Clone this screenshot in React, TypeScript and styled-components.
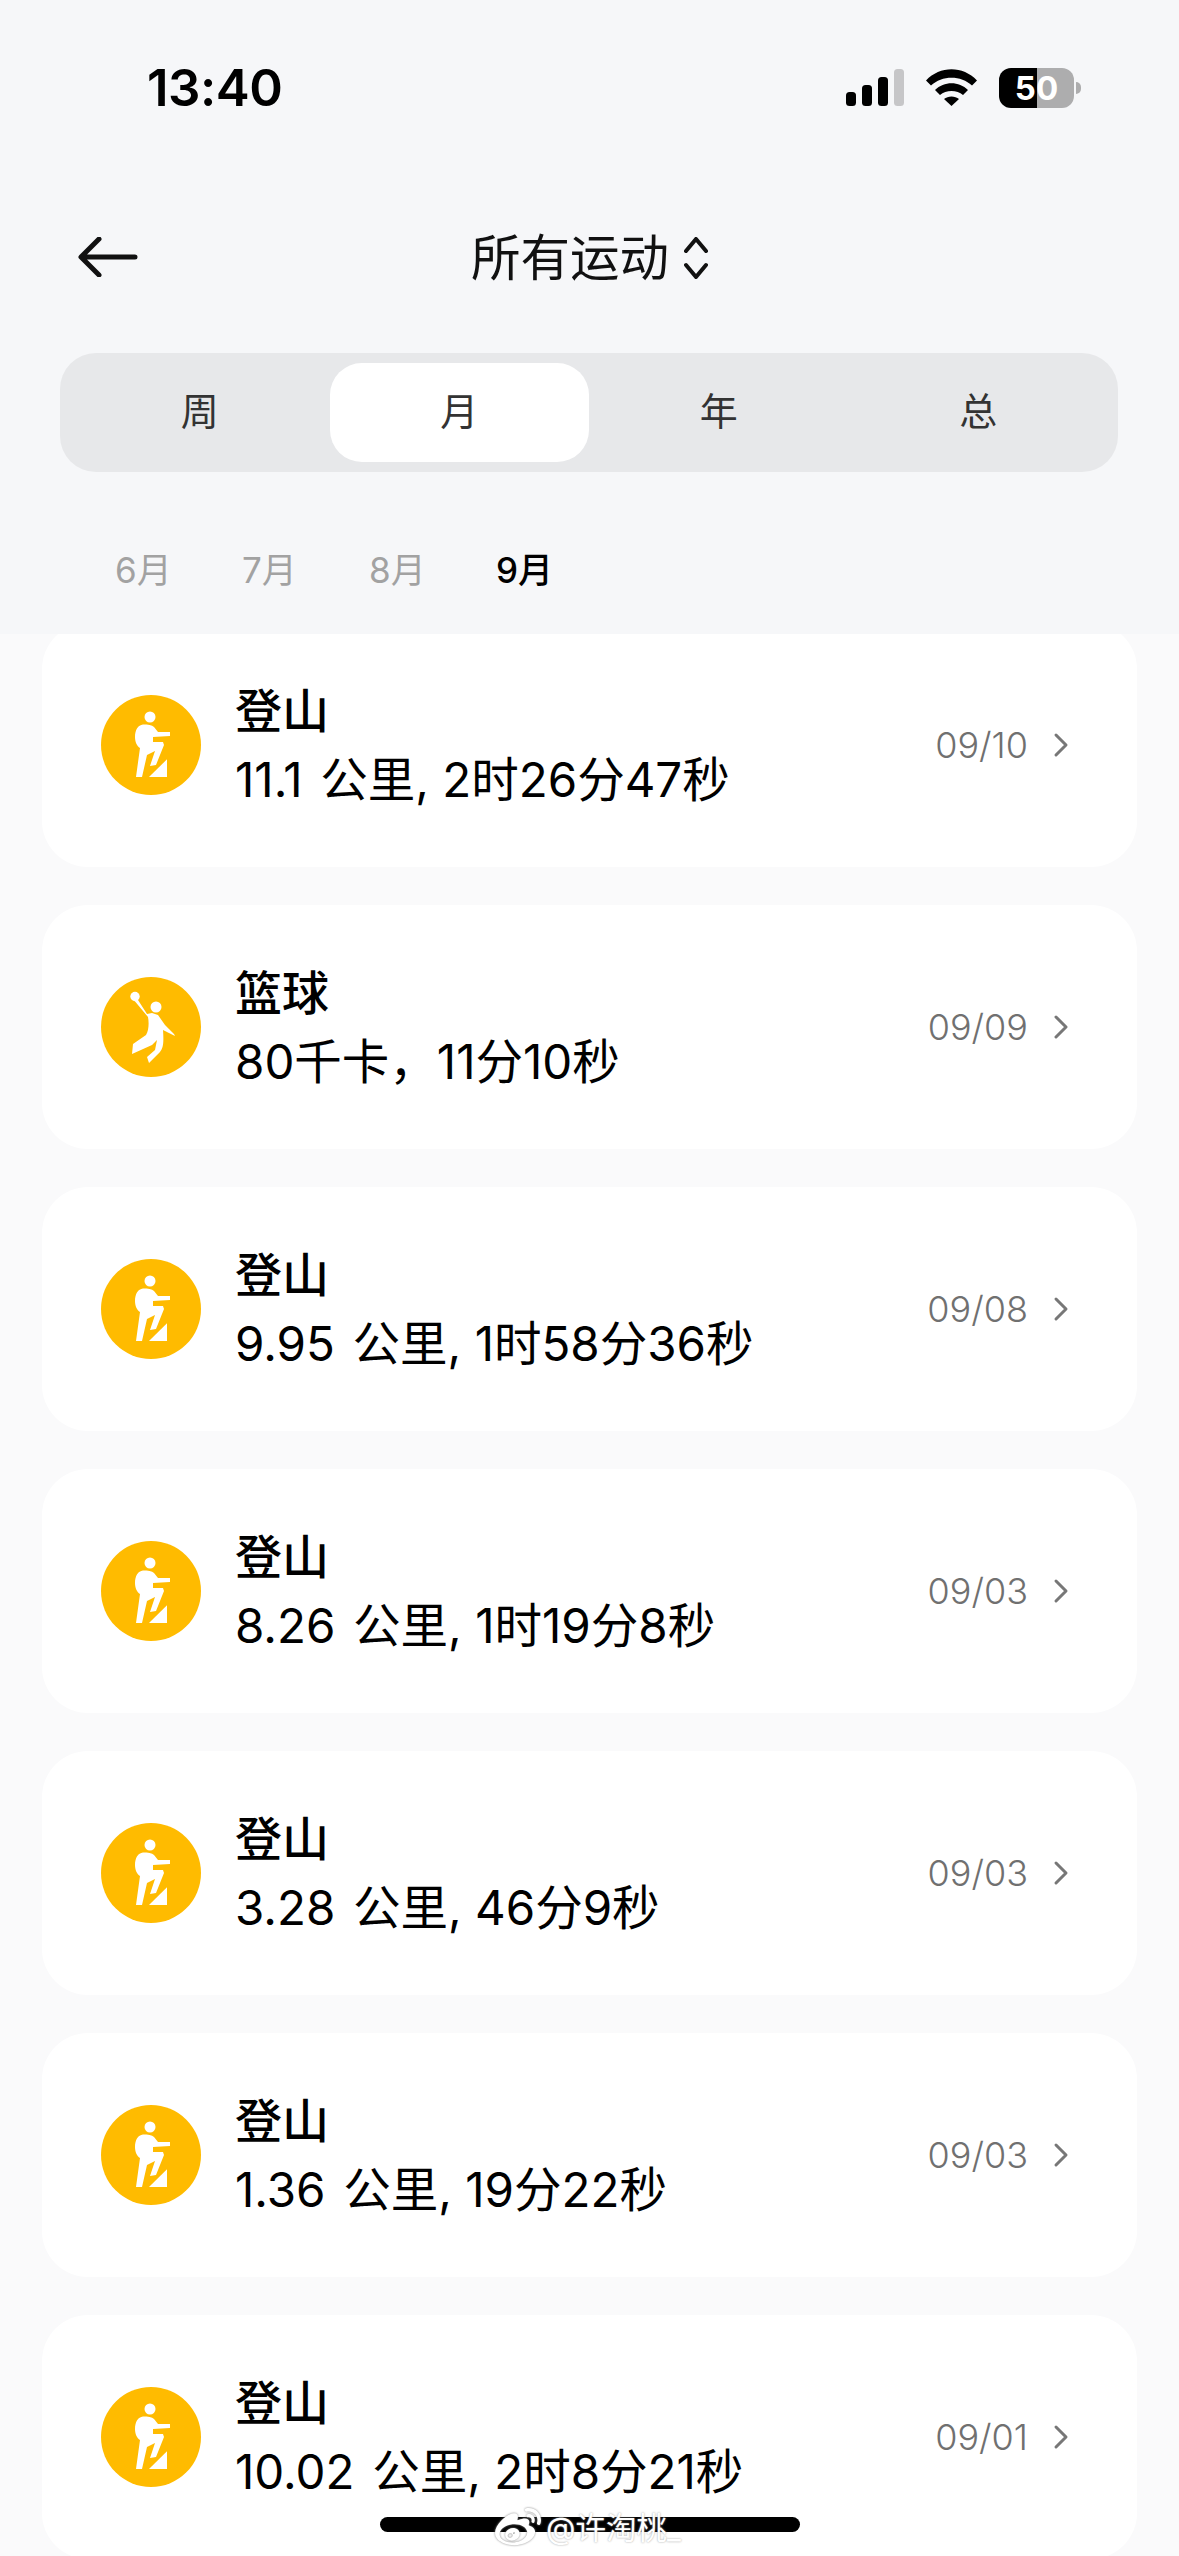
import React from "react"
import styled, { createGlobalStyle } from "styled-components"
import { FaWeibo } from "react-icons/fa"

const FONT = `Inter, "Noto Sans CJK SC", sans-serif`

const GlobalStyle = createGlobalStyle`
  html, body {
    margin: 0;
    padding: 0;
    background: #fafafb;
  }
  * {
    box-sizing: border-box;
  }
`

const Page = styled.div`
  position: relative;
  width: 1179px;
  height: 2556px;
  overflow: hidden;
  font-family: ${FONT};
  color: #000;
  display: flex;
  flex-direction: column;
`

const Header = styled.header`
  flex: none;
  height: 634px;
  background: #f6f7f9;
  display: flex;
  flex-direction: column;
`

const StatusBar = styled.div`
  height: 175px;
  padding: 0 105px 0 147px;
  display: flex;
  align-items: center;
  justify-content: space-between;
`

const Clock = styled.div`
  font-size: 51px;
  font-weight: 600;
  letter-spacing: -0.5px;
`

const StatusIcons = styled.div`
  display: flex;
  align-items: center;
  gap: 22px;
`

const Battery = styled.div`
  position: relative;
  width: 75px;
  height: 40px;
  border-radius: 12px;
  background: linear-gradient(90deg, #000 51%, #adadae 51%);
  color: #fff;
  font-size: 33px;
  font-weight: 700;
  line-height: 40px;
  text-align: center;

  &::after {
    content: "";
    position: absolute;
    right: -7px;
    top: 14px;
    width: 5px;
    height: 12px;
    border-radius: 0 6px 6px 0;
    background: #adadae;
  }
`

const NavBar = styled.div`
  position: relative;
  height: 176px;
  display: flex;
  align-items: flex-start;
  justify-content: center;
  padding-top: 54px;
`

const BackButton = styled.button`
  position: absolute;
  left: 78px;
  top: 62px;
  padding: 0;
  border: 0;
  background: none;
  display: flex;
`

const NavTitle = styled.div`
  display: flex;
  align-items: center;
  gap: 15px;
  font-size: 49.500px;
  line-height: 58px;
  color: #111;
`

const Segments = styled.div`
  margin: 2px 61px 0 60px;
  height: 119px;
  padding: 10px;
  border-radius: 36px;
  background: #e7e8ea;
  display: grid;
  grid-template-columns: repeat(4, 1fr);
`

const Segment = styled.div<{ $active?: boolean }>`
  display: flex;
  align-items: center;
  justify-content: center;
  padding-bottom: 8px;
  font-size: 38px;
  color: #333;
  border-radius: 32px;
  background: ${(p) => (p.$active ? "#fff" : "transparent")};
`

const Months = styled.div`
  margin-top: 78px;
  padding-left: 115px;
  display: flex;
  gap: 76px;
`

const Month = styled.div<{ $active?: boolean }>`
  width: 51px;
  font-size: 35px;
  line-height: 40px;
  white-space: nowrap;
  font-weight: ${(p) => (p.$active ? 500 : 400)};
  color: ${(p) => (p.$active ? "#000" : "#a2a2a2")};
`

const List = styled.main`
  flex: 1;
  min-height: 0;
  overflow: hidden;
  padding: 0 42px;
  display: flex;
  flex-direction: column;
  gap: 38px;
`

const Card = styled.article`
  flex: none;
  height: 244px;
  background: #fff;
  border-radius: 46px;
  padding: 0 68px 0 59px;
  display: flex;
  align-items: center;

  &:first-child {
    margin-top: -11px;
  }
`

const Badge = styled.svg`
  flex: none;
  width: 100px;
  height: 100px;
`

const Body = styled.div`
  flex: 1;
  margin-left: 34px;
`

const Title = styled.div`
  font-size: 47px;
  line-height: 69px;
  font-weight: 500;
`

const Detail = styled.div`
  font-size: 47.500px;
  line-height: 69px;
  white-space: pre;
`

const DateLabel = styled.div`
  font-size: 36px;
  color: #707070;
  font-weight: 300;
`

const Chevron = styled.svg`
  flex: none;
  margin-left: 25px;
  width: 16px;
  height: 26px;
`

const HomeBar = styled.div`
  position: absolute;
  left: 380px;
  top: 2517px;
  width: 420px;
  height: 15px;
  border-radius: 8px;
  background: #000;
`

const Watermark = styled.div`
  position: absolute;
  left: 495px;
  top: 2505px;
  display: flex;
  align-items: center;
  gap: 5px;
  font-size: 30.5px;
  line-height: 38px;
  color: #fff;
  text-shadow: 0 0 2px #9a9a9a;

  svg {
    filter: drop-shadow(0 0 1px #8a8a8a);
  }
`

const Hiker = () => (
  <Badge viewBox="0 0 100 100">
    <circle cx="50" cy="50" r="50" fill="#ffbb00" />
    <g fill="#fff">
      <circle cx="49" cy="22" r="5.5" />
      <path d="M42 29.5C37 30 34 35 34 42C34 47 36 51 39 53L35 82H41L46 60L54 56L49 71L55 70L63 50L62 47H52V42L69 41V37L57 37L53 32C51 30 47 29.5 42 29.5Z" />
      <path d="M48 82H66V64.3Z" />
    </g>
  </Badge>
)

const Baller = () => (
  <Badge viewBox="0 0 100 100">
    <circle cx="50" cy="50" r="50" fill="#ffbb00" />
    <g fill="#fff">
      <circle cx="34" cy="19.5" r="4.7" />
      <circle cx="55" cy="30" r="5.5" />
      <path d="M32 22L47 40C48 45 48 53 45 58L32 67L31 77L51 68L56 63L54 73L46 80L48 86L59 75C62 71 63 67 62 53L74 59L73 57L64 48L57 38L51 36L46 37L37 23Z" />
    </g>
  </Badge>
)

type Workout = {
  kind: "hike" | "ball"
  title: string
  detail: string
  date: string
}

// a space plus a hair space sits between the distance and its unit
const workouts: Workout[] = [
  { kind: "hike", title: "登山", detail: "11.1 \u200a公里, 2时26分47秒", date: "09/10" },
  { kind: "ball", title: "篮球", detail: "80千卡，11分10秒", date: "09/09" },
  { kind: "hike", title: "登山", detail: "9.95 \u200a公里, 1时58分36秒", date: "09/08" },
  { kind: "hike", title: "登山", detail: "8.26 \u200a公里, 1时19分8秒", date: "09/03" },
  { kind: "hike", title: "登山", detail: "3.28 \u200a公里, 46分9秒", date: "09/03" },
  { kind: "hike", title: "登山", detail: "1.36 \u200a公里, 19分22秒", date: "09/03" },
  { kind: "hike", title: "登山", detail: "10.02 \u200a公里, 2时8分21秒", date: "09/01" },
]

export default function App() {
  return (
    <Page>
      <GlobalStyle />
      <Header>
        <StatusBar>
          <Clock>13:40</Clock>
          <StatusIcons>
            <svg width="58" height="37" viewBox="0 0 58 37">
              <rect x="0" y="23" width="10" height="14" rx="3.5" fill="#000" />
              <rect x="16" y="16" width="10" height="21" rx="3.5" fill="#000" />
              <rect x="32" y="8" width="10" height="29" rx="3.5" fill="#000" />
              <rect x="48" y="0" width="10" height="37" rx="3.5" fill="#c6c6c8" />
            </svg>
            <svg width="51" height="37" viewBox="0 0 51 37">
              <path d="M0 11.5C14-3.5 37-3.5 51 11.5L46 16.500C35 6 16 6 5 16.500Z" fill="#000" />
              <path d="M9 21C18 12 33 12 42 21L37 26C31 20.500 20 20.500 14 26Z" fill="#000" />
              <path d="M18 30C22 26.500 29 26.500 33 30L25.500 37Z" fill="#000" />
            </svg>
            <Battery>50</Battery>
          </StatusIcons>
        </StatusBar>
        <NavBar>
          <BackButton aria-label="back">
            <svg width="60" height="40" viewBox="0 0 60 40" fill="none" stroke="#111" strokeWidth="5" strokeLinecap="round" strokeLinejoin="round">
              <path d="M57 20H4M21 2L3 20L21 38" />
            </svg>
          </BackButton>
          <NavTitle>
            所有运动
            <svg width="24" height="42" viewBox="0 0 24 42" fill="none" stroke="#111" strokeWidth="4" strokeLinecap="round" strokeLinejoin="round">
              <path d="M2 14L12 2L22 14M2 28L12 40L22 28" />
            </svg>
          </NavTitle>
        </NavBar>
        <Segments>
          <Segment>周</Segment>
          <Segment $active>月</Segment>
          <Segment>年</Segment>
          <Segment>总</Segment>
        </Segments>
        <Months>
          <Month>6月</Month>
          <Month>7月</Month>
          <Month>8月</Month>
          <Month $active>9月</Month>
        </Months>
      </Header>
      <List>
        {workouts.map((w, i) => (
          <Card key={i}>
            {w.kind === "hike" ? <Hiker /> : <Baller />}
            <Body>
              <Title>{w.title}</Title>
              <Detail>{w.detail}</Detail>
            </Body>
            <DateLabel>{w.date}</DateLabel>
            <Chevron viewBox="0 0 16 26" fill="none" stroke="#777" strokeWidth="3" strokeLinecap="round" strokeLinejoin="round">
              <path d="M3 3L13 13L3 23" />
            </Chevron>
          </Card>
        ))}
      </List>
      <HomeBar />
      <Watermark>
        <FaWeibo size={46} />
        <span>@许淘桃_</span>
      </Watermark>
    </Page>
  )
}
